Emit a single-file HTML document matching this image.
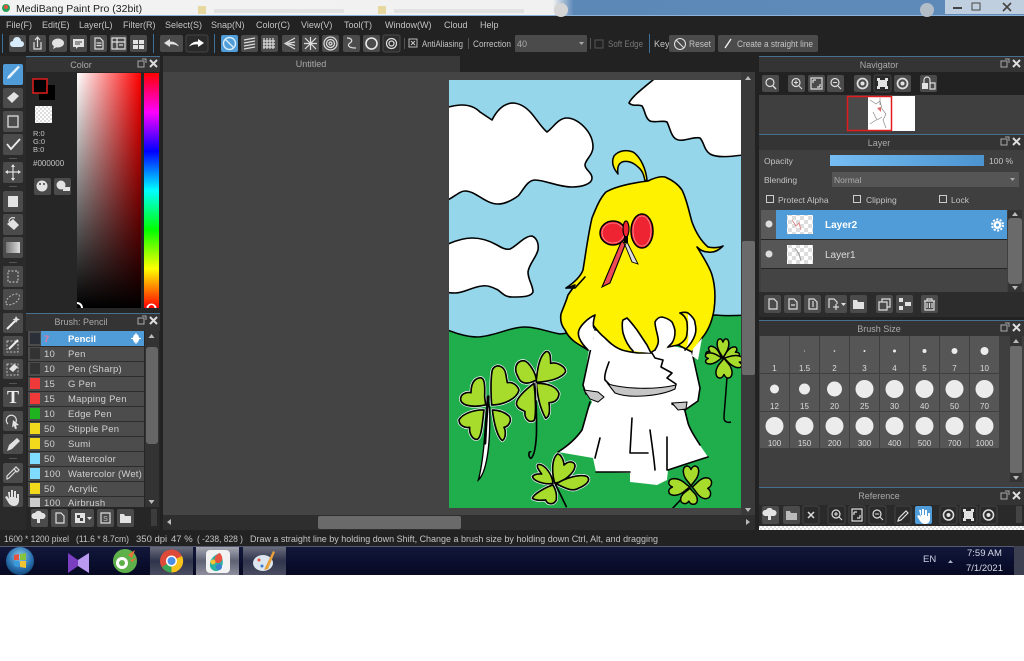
<!DOCTYPE html>
<html><head><meta charset="utf-8"><title>MediBang Paint Pro</title>
<style>
html,body{margin:0;padding:0;background:#fff;width:1024px;height:661px;overflow:hidden}
svg{display:block;position:absolute;left:0;top:0}
text{font-family:"Liberation Sans",sans-serif;font-size:9px;fill:#c4c4c4}
.b{fill:#4b4b4b}.ic{fill:none;stroke:#ddd;stroke-width:1.2}.f{fill:#e2e2e2}
.h{text-anchor:middle;fill:#aaa}.n{fill:#d0d0d0;font-size:9.5px;letter-spacing:.25px}
.s{text-anchor:middle;fill:#ddd;font-size:8px}
.ol{fill:none;stroke:#000;stroke-width:1.6;stroke-linecap:round;stroke-linejoin:round}
</style></head><body>
<svg width="1024" height="661" viewBox="0 0 1024 661" xmlns="http://www.w3.org/2000/svg">
<defs>
<clipPath id="art"><rect x="449" y="80" width="292" height="428"/></clipPath>
<linearGradient id="sv" x1="0" x2="1" y1="0" y2="0"><stop offset="0" stop-color="#fff"/><stop offset="1" stop-color="#f00"/></linearGradient>
<linearGradient id="bk" x1="0" x2="0" y1="0" y2="1"><stop offset="0" stop-color="#000" stop-opacity="0"/><stop offset="1" stop-color="#000"/></linearGradient>
<linearGradient id="hue" x1="0" x2="0" y1="0" y2="1"><stop offset="0" stop-color="#f00"/><stop offset=".167" stop-color="#f0f"/><stop offset=".333" stop-color="#00f"/><stop offset=".5" stop-color="#0ff"/><stop offset=".667" stop-color="#0f0"/><stop offset=".833" stop-color="#ff0"/><stop offset="1" stop-color="#f00"/></linearGradient>
<linearGradient id="tb" x1="0" x2="0" y1="0" y2="1"><stop offset="0" stop-color="#14183a"/><stop offset=".5" stop-color="#0b0f30"/><stop offset="1" stop-color="#070a22"/></linearGradient>
<linearGradient id="task" x1="0" x2="0" y1="0" y2="1"><stop offset="0" stop-color="#6a6d7c"/><stop offset=".5" stop-color="#30344c"/><stop offset="1" stop-color="#4a4d60"/></linearGradient>
<linearGradient id="taskA" x1="0" x2="0" y1="0" y2="1"><stop offset="0" stop-color="#a5a7b2"/><stop offset=".5" stop-color="#5f6274"/><stop offset="1" stop-color="#8d8f9d"/></linearGradient>
<linearGradient id="op" x1="0" x2="1" y1="0" y2="0"><stop offset="0" stop-color="#75bdf2"/><stop offset="1" stop-color="#4b94d0"/></linearGradient>
<linearGradient id="gr" x1="0" x2="1" y1="0" y2="0"><stop offset="0" stop-color="#777"/><stop offset="1" stop-color="#ddd"/></linearGradient>
<linearGradient id="tbar" x1="0" x2="1" y1="0" y2="0"><stop offset="0" stop-color="#f2f2f2"/><stop offset=".54" stop-color="#f1f1f1"/><stop offset=".56" stop-color="#5c88b8"/><stop offset="1" stop-color="#5f8bbb"/></linearGradient>
<radialGradient id="orb" cx=".5" cy=".35" r=".7"><stop offset="0" stop-color="#8fd0ee"/><stop offset=".6" stop-color="#2a72b0"/><stop offset="1" stop-color="#0f3d70"/></radialGradient>
<pattern id="chk" width="8" height="8" patternUnits="userSpaceOnUse"><rect width="8" height="8" fill="#fff"/><rect width="4" height="4" fill="#ddd"/><rect x="4" y="4" width="4" height="4" fill="#ddd"/></pattern>
<pattern id="chs" width="4" height="4" patternUnits="userSpaceOnUse"><rect width="4" height="4" fill="#fff"/><rect width="2" height="2" fill="#ddd"/><rect x="2" y="2" width="2" height="2" fill="#ddd"/></pattern>
<path id="leaf" d="M0 0C-3-5-13-9-14-19C-14-28-4-29 0-22C4-29 14-28 14-19C13-9 3-5 0 0Z" fill="#a8dc2c" stroke="#000" stroke-width="1.5" stroke-linejoin="round" vector-effect="non-scaling-stroke"/>
<g id="dock"><rect x="-1" y="-3" width="6" height="6" fill="none" stroke="#aaa"/><path d="M3-5h4v4" fill="none" stroke="#aaa"/><path d="M11-4l7 7M18-4l-7 7" stroke="#ddd" stroke-width="2"/></g>
<g id="cl" stroke-linejoin="round">
<path d="M110 165C80 172 40 170 35 150C33 133 50 125 66 128C66 105 72 85 95 83C108 85 108 110 107 140Z"/>
<path d="M128 165C125 130 125 80 130 60C138 40 165 45 170 70L175 98C190 95 205 105 210 120C205 145 165 165 128 165Z"/>
<path d="M105 180C80 178 40 190 30 210C30 228 50 235 62 232C60 250 70 270 85 268C98 262 100 220 105 180Z"/>
<path d="M130 180C135 220 145 260 160 272C172 265 170 240 165 232C180 230 190 210 180 198C165 185 145 180 130 180Z"/>
<path d="M258 92C240 102 215 105 207 80C195 60 198 32 225 32C240 35 262 70 262 92Z"/>
<path d="M262 90C265 60 270 20 290 5C305 0 305 25 305 40C325 35 350 50 350 65C340 85 300 95 262 97Z"/>
<path d="M262 100C265 130 270 170 290 205C305 200 302 170 300 158C320 158 330 145 330 130C320 105 290 100 262 100Z"/>
<path d="M255 100C235 115 205 140 202 160C205 180 225 180 228 185C225 205 240 220 255 212C262 200 260 140 255 100Z"/>
<path d="M318 400C310 380 305 330 325 312C340 312 345 340 345 345C360 330 380 335 378 350C375 370 345 395 318 400Z"/>
<path d="M312 400C290 405 255 395 250 380C258 370 270 372 278 372C265 355 260 345 270 343C290 345 310 375 312 400Z"/>
<path d="M322 402C345 385 395 370 415 380C430 395 400 410 388 415C370 428 340 410 322 402Z"/>
<path d="M312 405C295 410 255 430 250 445C265 455 285 450 290 450C295 465 315 465 322 450C325 430 318 415 312 405Z"/>
</g>
</defs>

<!-- window background -->
<rect width="1024" height="575" fill="#222"/>
<rect y="575" width="1024" height="86" fill="#fff"/>
<!-- title bar -->
<rect width="1024" height="15" fill="url(#tbar)"/>
<rect y="15" width="1024" height="1" fill="#8db4d8"/>
<circle cx="6" cy="8" r="4" fill="#25a25a"/><circle cx="6" cy="7" r="2" fill="#e8503f"/>
<text x="16" y="12" style="font-size:10.5px;fill:#222">MediBang Paint Pro (32bit)</text>
<rect x="198" y="6" width="8" height="8" fill="#e6d9a0"/><rect x="378" y="6" width="8" height="8" fill="#e6d9a0"/>
<rect x="214" y="9" width="130" height="4" fill="#e2e2e2"/><rect x="394" y="9" width="130" height="4" fill="#e2e2e2"/>
<circle cx="561" cy="10" r="7" fill="#d5d5d5"/><circle cx="927" cy="10" r="7" fill="#b3bdc8"/>
<rect x="945" y="0" width="79" height="14" fill="#c0cfdf"/>
<rect x="953" y="7" width="9" height="2" fill="#444"/><rect x="972" y="3" width="8" height="7" fill="none" stroke="#444"/>
<path d="M1003 3l8 8M1011 3l-8 8" stroke="#444" stroke-width="1.6"/>

<!-- menu -->
<text x="6" y="28">File(F)</text><text x="42" y="28">Edit(E)</text><text x="79" y="28">Layer(L)</text><text x="123" y="28">Filter(R)</text><text x="165" y="28">Select(S)</text><text x="211" y="28">Snap(N)</text><text x="256" y="28">Color(C)</text><text x="301" y="28">View(V)</text><text x="344" y="28">Tool(T)</text><text x="385" y="28">Window(W)</text><text x="444" y="28">Cloud</text><text x="480" y="28">Help</text>

<!-- toolbar -->
<rect x="2" y="34" width="1" height="19" fill="#3e6f96"/>
<rect class="b" x="9" y="35" width="17" height="17" rx="2"/><path d="M13 47a3 3 0 0 1 0-6 4 4 0 0 1 8 0 3 3 0 0 1 0 6z" fill="#d9ecfb"/>
<rect class="b" x="29" y="35" width="17" height="17" rx="2"/><path class="ic" d="M34 42v7h7v-7M37.500 47v-9M35 40l2.500-3 2.500 3"/>
<rect class="b" x="49" y="35" width="18" height="17" rx="2"/><ellipse class="f" cx="58" cy="43" rx="6" ry="4.500"/><path class="f" d="M54 46l-1 3 4-2z"/>
<rect class="b" x="70" y="35" width="17" height="17" rx="2"/><path class="f" d="M73 39h11v8h-6l-2 2v-2h-3z"/><path stroke="#444" d="M75 42h7M75 44h5"/>
<rect class="b" x="90" y="35" width="17" height="17" rx="2"/><path class="ic" d="M95 38h5l3 3v8h-8zM96.500 43h5M96.500 45.500h5"/>
<rect class="b" x="110" y="35" width="17" height="17" rx="2"/><path class="ic" d="M112 38h13v11h-13zM112 42h13M117 38v11M119 45h4"/>
<rect class="b" x="130" y="35" width="17" height="17" rx="2"/><path class="f" d="M133 40h5v4h-5zM139 40h5v4h-5zM133 45h5v4h-5zM139 45h5v4h-5z"/>
<rect x="153" y="34" width="1" height="19" fill="#3e6f96"/>
<rect class="b" x="160" y="35" width="23" height="17" rx="2"/><path class="f" d="M164 43l6-4v2.500c4 0 7 1.500 9 5-3-2-6-2.500-9-2v2.500z"/>
<rect x="186" y="35" width="22" height="17" rx="2" fill="#2a2a2a" stroke="#444"/><path fill="#fff" d="M204 43l-6-4v2.500c-4 0-7 1.500-9 5 3-2 6-2.500 9-2v2.500z"/>
<rect x="214" y="34" width="1" height="19" fill="#3e6f96"/>
<rect x="221" y="35" width="17" height="17" rx="2" fill="#4f9cd9"/><circle cx="229.500" cy="43.500" r="6" fill="none" stroke="#d8ecfa" stroke-width="1.400"/><path d="M225 39l9 9" stroke="#d8ecfa" stroke-width="1.400"/>
<rect class="b" x="241" y="35" width="17" height="17" rx="2"/><path class="ic" stroke-width=".8" d="M244 40l11-2M244 43l11-2M244 46l11-2M244 49l11-2"/>
<rect class="b" x="261" y="35" width="17" height="17" rx="2"/><path class="ic" d="M264 38v11M267 38v11M270 38v11M273 38v11M263 41h12M263 44h12M263 47h12"/>
<rect class="b" x="282" y="35" width="17" height="17" rx="2"/><path class="ic" d="M295 38l-10 5.500 10 5.500M295 42l-8 1.500 8 2"/>
<rect class="b" x="302" y="35" width="17" height="17" rx="2"/><path class="ic" d="M305 38l11 11M316 38l-11 11M304 43.500h13M310.500 37v13"/>
<rect class="b" x="322" y="35" width="17" height="17" rx="2"/><circle class="ic" cx="330.500" cy="43.500" r="6.500"/><circle class="ic" cx="330.500" cy="43.500" r="4"/><circle class="ic" cx="330.500" cy="43.500" r="1.500"/>
<rect class="b" x="343" y="35" width="17" height="17" rx="2"/><path class="ic" d="M347 38c5 0 6 3 3 5s-2 5 6 5"/>
<rect class="b" x="363" y="35" width="17" height="17" rx="2"/><circle cx="371.500" cy="43.500" r="5.500" fill="none" stroke="#e8e8e8" stroke-width="1.600"/>
<rect x="383" y="35" width="17" height="17" rx="2" fill="#2e2e2e" stroke="#4a4a4a"/><circle class="ic" cx="391.500" cy="43.500" r="5"/><circle class="ic" cx="391.500" cy="43.500" r="2.500"/>
<rect x="404" y="38" width="1" height="11" fill="#555"/>
<rect x="409" y="39" width="8" height="8" fill="none" stroke="#bbb"/><path d="M411 41l4 4M415 41l-4 4" stroke="#ccc"/>
<text x="422" y="47" textLength="41" lengthAdjust="spacingAndGlyphs">AntiAliasing</text>
<rect x="468" y="38" width="1" height="11" fill="#555"/>
<text x="473" y="47" textLength="38" lengthAdjust="spacingAndGlyphs">Correction</text>
<rect class="b" x="515" y="35" width="72" height="17" rx="1"/><text x="517" y="47" style="fill:#aaa">40</text><path d="M579 42h5l-2.500 3z" fill="#aaa"/>
<rect x="590" y="38" width="1" height="11" fill="#555"/>
<rect x="595" y="40" width="8" height="8" fill="none" stroke="#555"/>
<text x="608" y="47" style="fill:#777" textLength="35" lengthAdjust="spacingAndGlyphs">Soft Edge</text>
<rect x="649" y="34" width="1" height="19" fill="#3e6f96"/>
<text x="654" y="47">Key</text>
<rect class="b" x="669" y="35" width="46" height="17" rx="2"/><circle cx="680" cy="44" r="5.500" fill="none" stroke="#ddd" stroke-width="1.100"/><path d="M676 40l8 8" stroke="#ddd" stroke-width="1.100"/>
<text x="689" y="47" textLength="22" lengthAdjust="spacingAndGlyphs">Reset</text>
<rect class="b" x="718" y="35" width="100" height="17" rx="2"/><path d="M725 48l6-9" stroke="#eee" stroke-width="1.400"/>
<text x="737" y="47" textLength="76" lengthAdjust="spacingAndGlyphs">Create a straight line</text>

<!-- left tool column -->
<rect y="56" width="26" height="474" fill="#2a2a2a"/>
<rect x="3" y="64" width="20" height="21" rx="2" fill="#4f9cd9"/><path d="M7 79l3-1 10-11-2-1-10 10z" fill="#e8f2fa"/>
<rect class="b" x="3" y="88" width="20" height="20" rx="2"/><path class="f" d="M7 98l7-6 5 4-7 7z"/>
<rect class="b" x="3" y="111" width="20" height="21" rx="2"/><rect x="8" y="116" width="10" height="11" fill="none" stroke="#ddd" stroke-width="1.300"/>
<rect class="b" x="3" y="134" width="20" height="21" rx="2"/><path d="M7 144l4 5 9-10" fill="none" stroke="#eee" stroke-width="1.800"/>
<rect x="9" y="158" width="8" height="1" fill="#555"/>
<rect class="b" x="3" y="162" width="20" height="21" rx="2"/><path class="ic" stroke-width="1.600" d="M6 172h14M13 165v14"/><path class="f" d="M13 164l-2 3h4zM13 181l-2-3h4zM5 172l3-2v4zM21 172l-3-2v4z"/>
<rect x="9" y="186" width="8" height="1" fill="#555"/>
<rect class="b" x="3" y="191" width="20" height="21" rx="2"/><rect class="f" x="8" y="196" width="10" height="11"/>
<rect class="b" x="3" y="214" width="20" height="21" rx="2"/><path class="f" d="M7 224l6-5 6 6-5 5z"/><path class="ic" d="M9 222c0-4 3-5 6-4"/>
<rect class="b" x="3" y="237" width="20" height="21" rx="2"/><rect x="6" y="242" width="14" height="11" fill="url(#gr)"/>
<rect x="9" y="262" width="8" height="1" fill="#555"/>
<rect class="b" x="3" y="266" width="20" height="21" rx="2"/><rect x="8" y="271" width="10" height="11" fill="none" stroke="#ccc" stroke-dasharray="2 1.500"/>
<rect class="b" x="3" y="289" width="20" height="21" rx="2"/><path d="M6 303c0-5 6-9 11-9 3 0 3 3 1 6-2 4-12 7-12 3z" fill="none" stroke="#bbb" stroke-dasharray="2 1.500"/>
<rect class="b" x="3" y="313" width="20" height="20" rx="2"/><path d="M7 329l8-8" stroke="#eee" stroke-width="2"/><path class="f" d="M16 316l1.500 2.500 2.500 1-2.500 1-1.500 2.500-1-2.500-2.500-1 2.500-1z"/>
<rect class="b" x="3" y="336" width="20" height="20" rx="2"/><rect x="7" y="341" width="11" height="11" fill="none" stroke="#bbb" stroke-dasharray="2 1.500"/><path d="M9 349l9-9" stroke="#eee" stroke-width="2"/>
<rect class="b" x="3" y="359" width="20" height="20" rx="2"/><rect x="7" y="364" width="11" height="11" fill="none" stroke="#bbb" stroke-dasharray="2 1.500"/><path class="f" d="M9 369l5-5 4 3-5 5z"/>
<rect x="9" y="383" width="8" height="1" fill="#555"/>
<rect class="b" x="3" y="387" width="20" height="20" rx="2"/><text x="13" y="403" text-anchor="middle" style="font-family:'Liberation Serif',serif;font-size:18px;font-weight:bold;fill:#eee">T</text>
<rect class="b" x="3" y="411" width="20" height="20" rx="2"/><path class="ic" d="M8 424a5 5 0 1 1 5 1"/><path class="f" d="M13 420l6 5-3 .5 1 3-2 .5-1-3-2 1.500z"/>
<rect class="b" x="3" y="434" width="20" height="20" rx="2"/><path class="f" d="M7 451l2-6 8-7 3 3-8 8z"/>
<rect x="9" y="458" width="8" height="1" fill="#555"/>
<rect class="b" x="3" y="463" width="20" height="20" rx="2"/><path class="ic" stroke-width="1.500" d="M7 479l2-1 7-7-2-2-7 7zM14 469l2-2 3 3-2 2z"/>
<rect class="b" x="3" y="486" width="20" height="21" rx="2"/><path class="f" d="M8 492h2v5h1v-7h2v7h1v-6h2v7h1v-4h2v6c0 4-2 6-5 6s-5-2-6-4l-3-5 2-1 2 3z"/>

<!-- colour panel -->
<rect x="26" y="56" width="134" height="258" fill="#262626"/>
<rect x="26" y="56" width="134" height="16" fill="#343434"/><rect x="26" y="56" width="134" height="1" fill="#47708f"/>
<text class="h" x="81" y="68">Color</text>
<use href="#dock" x="139" y="64"/>
<rect x="39" y="85" width="16" height="15" fill="#000"/>
<rect x="33" y="79" width="14" height="14" fill="#000" stroke="#e21c1c" stroke-width="1.500"/>
<rect x="35" y="106" width="17" height="17" fill="url(#chs)"/>
<text x="33" y="136" style="font-size:7.500px">R:0</text><text x="33" y="144" style="font-size:7.500px">G:0</text><text x="33" y="152" style="font-size:7.500px">B:0</text>
<text x="33" y="166" style="font-size:8px">#000000</text>
<rect class="b" x="34" y="178" width="17" height="17" rx="2"/><circle class="f" cx="42" cy="186" r="5.500"/><circle cx="40" cy="184" r="1" fill="#444"/><circle cx="44" cy="184" r="1" fill="#444"/>
<rect class="b" x="54" y="178" width="17" height="17" rx="2"/><circle class="f" cx="61" cy="185" r="4.500"/><rect class="f" x="63" y="187" width="7" height="4"/>
<rect x="77" y="73" width="64" height="235" fill="url(#sv)"/><rect x="77" y="73" width="64" height="235" fill="url(#bk)"/>
<path d="M77 302a6 6 0 0 1 6 6h-2a4 4 0 0 0-4-4z" fill="#fff"/>
<rect x="144" y="73" width="15" height="235" fill="url(#hue)"/>
<path d="M146.500 308a5 4.500 0 0 1 10 0h-2a3 3 0 0 0-6 0z" fill="#fff"/>

<!-- brush panel -->
<rect x="26" y="314" width="134" height="216" fill="#262626"/>
<rect x="26" y="313" width="134" height="18" fill="#343434"/><rect x="26" y="313" width="134" height="1" fill="#47708f"/>
<text class="h" x="81" y="325">Brush: Pencil</text>
<use href="#dock" x="139" y="321"/>
<rect x="28" y="331" width="116" height="176" fill="#4c4c4c"/>
<rect x="41" y="331" width="103" height="15" fill="#4f9cd9"/>
<g fill="#2c2c2c"><rect x="28" y="346" width="116" height="1"/><rect x="28" y="361" width="116" height="1"/><rect x="28" y="376" width="116" height="1"/><rect x="28" y="391" width="116" height="1"/><rect x="28" y="406" width="116" height="1"/><rect x="28" y="421" width="116" height="1"/><rect x="28" y="436" width="116" height="1"/><rect x="28" y="451" width="116" height="1"/><rect x="28" y="466" width="116" height="1"/><rect x="28" y="481" width="116" height="1"/><rect x="28" y="496" width="116" height="1"/></g>
<rect x="30" y="333" width="10" height="11" fill="#2b2f38"/>
<rect x="30" y="348" width="10" height="11" fill="#333"/><rect x="30" y="363" width="10" height="11" fill="#333"/>
<rect x="30" y="378" width="10" height="11" fill="#f03a3a"/><rect x="30" y="393" width="10" height="11" fill="#f03a3a"/>
<rect x="30" y="408" width="10" height="11" fill="#1fb41f"/><rect x="30" y="423" width="10" height="11" fill="#f3d91c"/>
<rect x="30" y="438" width="10" height="11" fill="#f3d91c"/><rect x="30" y="453" width="10" height="11" fill="#7fdcff"/>
<rect x="30" y="468" width="10" height="11" fill="#7fdcff"/><rect x="30" y="483" width="10" height="11" fill="#f3d91c"/>
<rect x="30" y="498" width="10" height="9" fill="#ccc"/>
<text x="44" y="342" style="font-weight:bold;fill:#e67aa0;font-size:9.5px">7</text><text x="68" y="342" style="font-weight:bold;fill:#fff;font-size:9.5px">Pencil</text>
<path d="M133 338.500l1.500-3.500h3l1.500 3.500-1.500 3.500h-3z M131 338.500h10M136 333v11" fill="#fff" stroke="#fff"/>
<text class="n" x="44" y="357">10</text><text class="n" x="68" y="357">Pen</text>
<text class="n" x="44" y="372">10</text><text class="n" x="68" y="372">Pen (Sharp)</text>
<text class="n" x="44" y="387">15</text><text class="n" x="68" y="387">G Pen</text>
<text class="n" x="44" y="402">15</text><text class="n" x="68" y="402">Mapping Pen</text>
<text class="n" x="44" y="417">10</text><text class="n" x="68" y="417">Edge Pen</text>
<text class="n" x="44" y="432">50</text><text class="n" x="68" y="432">Stipple Pen</text>
<text class="n" x="44" y="447">50</text><text class="n" x="68" y="447">Sumi</text>
<text class="n" x="44" y="462">50</text><text class="n" x="68" y="462">Watercolor</text>
<text class="n" x="44" y="477">100</text><text class="n" x="68" y="477" textLength="74">Watercolor (Wet)</text>
<text class="n" x="44" y="492">50</text><text class="n" x="68" y="492">Acrylic</text>
<text class="n" x="44" y="506">100</text><text class="n" x="68" y="506">Airbrush</text>
<rect x="28" y="507" width="116" height="2" fill="#262626"/>
<rect x="145" y="331" width="14" height="176" fill="#333"/>
<rect x="146" y="347" width="12" height="97" rx="3" fill="#666"/>
<path d="M148.500 338l3-4 3 4zM148.500 500l3 4 3-4z" fill="#bbb"/>
<rect class="b" x="31" y="509" width="17" height="18" rx="2"/><path class="f" d="M34 519a3 3 0 0 1 1-6 4 4 0 0 1 7 0 3 3 0 0 1 1 6h-3v4h-3v-4z"/>
<rect class="b" x="51" y="509" width="17" height="18" rx="2"/><path class="ic" d="M56 513h5l3 3v7h-8z"/>
<rect class="b" x="71" y="509" width="23" height="18" rx="2"/><path class="f" d="M75 513h10v10h-10z"/><path d="M77 515h3v3h-3zM80 518h3v3h-3z" fill="#444"/><path class="f" d="M87 517h5l-2.500 3z"/>
<rect class="b" x="97" y="509" width="17" height="18" rx="2"/><path class="ic" d="M101 513h9v10h-9z"/><text x="105.500" y="521" text-anchor="middle" style="font-size:7px">S</text>
<rect class="b" x="117" y="509" width="17" height="18" rx="2"/><path class="f" d="M120 514h4l1 2h6v7h-11z"/>
<rect x="151" y="509" width="6" height="17" fill="#3c3c3c"/>

<!-- canvas area -->
<rect x="163" y="56" width="297" height="16" fill="#383838"/>
<rect x="163" y="72" width="592" height="443" fill="#444"/>
<text class="h" x="311" y="67">Untitled</text>

<!-- artwork -->
<g clip-path="url(#art)">
<rect x="449" y="80" width="292" height="428" fill="#95d6ea"/>
<path d="M440 327C452 332 465 337 478 337C495 336 510 327 525 327C537 327 548 332 560 334L700 318L715 315C725 316 733 316 750 315V520H440Z" fill="#1fae4b" stroke="#000" stroke-width="1.500"/>
<g class="ol">
<path d="M440 110C447 107 456 105 462 105C470 105 476 108 480 112L492 120C496 112 502 104 512 103C520 103 527 108 532 114C537 120 542 128 547 132C553 128 558 118 567 118C578 118 593 132 593 147C593 155 585 160 585 165C585 170 592 172 592 178C592 184 582 187 572 187C558 187 545 180 535 180C527 180 523 191 518 196C511 201 505 204 498 204C485 204 476 191 465 191C459 191 454 198 440 204Z" fill="#fff"/>
<path d="M665 70C646 86 632 96 629 103C633 107 638 104 642 106C645 110 645 118 650 121C655 123 662 120 667 122C670 128 671 136 676 139C682 143 694 136 700 138C704 142 704 150 710 154C717 158 730 157 750 154V70Z" fill="#fff"/>
<path d="M440 248C455 240 465 238 472 238C482 238 490 241 497 245C502 248 506 250 510 249C517 246 524 236 532 236C537 238 539 244 538 250C536 258 529 264 528 272C528 280 533 285 533 292C531 297 522 297 512 297C505 297 502 293 498 290C492 287 487 285 482 286C472 287 464 293 455 293C452 293 447 293 440 291Z" fill="#fff"/>
</g>
<!-- dress -->
<path d="M592 330L583 387L592 402L588 410L582 430C575 440 566 447 558 452L593 458L596 472L630 473L630 482L657 485L667 480L668 470L708 457C700 445 692 435 688 423L684 410L698 402L700 388L692 350Z" fill="#fff"/>
<path class="ol" stroke-width="1.300" d="M593 338L583 385L586 394M590 402C587 412 585 420 582 430C575 440 566 447 558 452M596 472H630M668 470C680 466 695 461 708 457M700 445C695 437 690 430 688 423L685 411"/>
<path class="ol" stroke-width="1.300" d="M692 352L700 388L698 401L685 410L672 404M609 362C606 370 604 376 605 380L609 384M647 345L655 358L663 360L661 367L672 373L667 378L676 384"/>
<path d="M608 384C625 389 655 390 676 385L675 389C660 396 630 399 615 393Z" fill="#c6c6c6" stroke="#000" stroke-width="1.100"/>
<path d="M584 390L590 399L598 402L604 397L598 392Z" fill="#c6c6c6" stroke="#000" stroke-width="1"/>
<path d="M672 403L687 402L686 409L678 410Z" fill="#c6c6c6" stroke="#000" stroke-width="1"/>
<path class="ol" stroke-width="1.200" d="M632 418L630 453H648M650 430C652 445 654 458 655 470M667 437L667 470M600 438C598 446 597 450 595 458"/>
<!-- hair -->
<path d="M648 181C654 178 660 176 665 177C672 180 678 184 682 190C687 200 689 212 692 222C696 233 701 241 708 247C713 248 718 248 723 246C718 251 713 253 708 252C703 252 700 250 697 247C704 258 710 268 712 275C715 285 716 295 714 310C712 322 708 331 702 338C699 343 696 348 692 352L678 345L668 347L655 350L650 353L638 353C632 352 628 352 622 350C614 347 609 342 605 338C600 334 596 329 593 325L588 350C580 345 570 341 565 330C561 325 560 320 561 314C563 308 566 302 568 295L575 285C570 287 568 288 566 288C572 284 580 278 583 270C586 252 588 235 592 218C596 208 600 198 606 192C616 186 632 183 648 181Z" fill="#fff200" stroke="#000" stroke-width="1.600" stroke-linejoin="round"/>
<path d="M647 180C646 170 641 157 633 152C626 149 618 151 614 156C611 162 613 168 618 174C617 168 618 164 622 162C628 160 634 163 638 167C643 171 644 176 645 181Z" fill="#fff200" stroke="#000" stroke-width="1.500" stroke-linejoin="round"/>
<path class="ol" d="M585 277L575 288L566 288"/>
<!-- white locks -->
<path d="M588 350C580 342 577 335 579 330C581 325 588 318 595 315C593 322 593 326 594 330L593 350Z" fill="#fff"/>
<path class="ol" d="M588 350C580 342 577 335 579 330C581 325 588 318 595 315C593 322 593 326 594 328"/>
<path d="M633 351C628 346 625 340 623 333C622 328 622 322 623 320L627 318C631 322 634 326 637 330L647 345L651 353Z" fill="#fff"/>
<path class="ol" d="M633 351C628 346 625 340 623 333C622 328 622 322 623 320L627 318C631 322 634 326 637 330L647 345L651 353"/>
<path d="M655 350C658 345 659 342 658 338C657 332 655 327 655 322C657 318 660 317 662 317C667 318 670 320 672 322C674 326 675 329 675 332C675 337 674 340 672 343L668 347L660 352Z" fill="#fff"/>
<path class="ol" d="M655 350C658 345 659 342 658 338C657 332 655 327 655 322C657 318 660 317 662 317C667 318 670 320 672 322C674 326 675 329 675 332C675 337 674 340 672 343L668 347"/>
<path class="ol" d="M678 345C684 342 687 338 687 333C688 328 687 325 687 322C686 318 684 315 680 313"/>
<path d="M688 313C692 316 695 320 695 323C696 327 696 332 695 335C694 339 692 343 690 345C688 348 686 349 685 350C688 345 689 338 688 333C689 326 688 320 688 313Z" fill="#fff"/>
<path class="ol" d="M680 313C684 312 686 312 688 313C692 316 695 320 695 323C696 327 696 332 695 335C693 341 689 346 685 350"/>
<path d="M693 349L702 338L698 360L692 356Z" fill="#fff"/>
<!-- bow -->
<path d="M622 240L602 287L610 283L625 245Z" fill="#ee4a55" stroke="#000" stroke-width="1.100"/>
<path d="M627 242L638 264L632 262L625 245Z" fill="#ddd" stroke="#000" stroke-width=".9"/>
<ellipse cx="613" cy="233" rx="13" ry="12" fill="#ee2433" stroke="#000" stroke-width="1.500"/>
<ellipse cx="642" cy="231" rx="11" ry="17" fill="#ee2433" stroke="#000" stroke-width="1.500"/>
<ellipse cx="613" cy="233" rx="11" ry="10" fill="none" stroke="#f6b5bb" stroke-width=".6"/>
<ellipse cx="642" cy="231" rx="9" ry="15" fill="none" stroke="#f6b5bb" stroke-width=".6"/>
<ellipse cx="626" cy="229" rx="3" ry="8" fill="#ee2433" stroke="#000" stroke-width="1.200"/>
<path d="M624 236L624 243L628 243L628 236Z" fill="#000"/>
<!-- clovers -->
<g transform="translate(449 350) scale(.3333)" stroke-linecap="round">
<use href="#cl" stroke="#fff" stroke-width="9" fill="none"/>
<use href="#cl" stroke="#000" stroke-width="5" fill="#a8dc2c"/>
<path d="M262 100C258 140 265 200 262 260C260 290 255 320 245 325C238 320 238 305 245 305" stroke="#000" stroke-width="5" fill="none"/>
<path d="M262 100L262 150" stroke="#ddd" stroke-width="2" fill="none"/>
<path d="M115 140C110 220 105 330 88 390C110 370 125 300 122 175Z" fill="#fff" stroke="#000" stroke-width="4"/>
<path d="M118 140C112 200 110 240 108 280" stroke="#000" stroke-width="8" fill="none"/>
<path d="M318 400L352 470" stroke="#000" stroke-width="5" fill="none"/>
</g>
<path d="M690 490L671 510" stroke="#000" stroke-width="1.600" fill="none"/>
<use href="#leaf" transform="translate(691 486) rotate(0) scale(.55 .75)"/>
<use href="#leaf" transform="translate(690 487) rotate(-90) scale(.6 .8)"/>
<use href="#leaf" transform="translate(692 487) rotate(95) scale(.75 .72)"/>
<use href="#leaf" transform="translate(690 488) rotate(185) scale(.6 .6)"/>
<path d="M727 376C726 395 724 412 724 418C724 422 728 423 731 422" stroke="#000" stroke-width="1.500" fill="none"/>
<use href="#leaf" transform="translate(723 358) rotate(0) scale(.42 .72)"/>
<use href="#leaf" transform="translate(722 358) rotate(-62) scale(.42 .62)"/>
<use href="#leaf" transform="translate(723 358) rotate(65) scale(.42 .62)"/>
<use href="#leaf" transform="translate(722 358) rotate(-92) scale(.4 .62)"/>
<use href="#leaf" transform="translate(724 358) rotate(180) scale(.58 .75)"/>
<use href="#leaf" transform="translate(724 358) rotate(105) scale(.42 .72)"/>
</g>

<!-- canvas scrollbars -->
<rect x="741" y="72" width="14" height="443" fill="#3a3a3a"/>
<rect x="742" y="241" width="13" height="134" rx="2" fill="#6a6a6a"/>
<path d="M745 80l3-4 3 4zM745 508l3 4 3-4z" fill="#bbb"/>
<rect x="163" y="515" width="592" height="15" fill="#2e2e2e"/>
<rect x="318" y="516" width="143" height="13" rx="2" fill="#6a6a6a"/>
<path d="M171 519l-4 3 4 3zM746 519l4 3-4 3z" fill="#bbb"/>

<!-- navigator -->
<rect x="759" y="56" width="265" height="78" fill="#3f3f3f"/>
<rect x="759" y="56" width="265" height="16" fill="#343434"/><rect x="759" y="56" width="265" height="1" fill="#47708f"/>
<text class="h" x="879" y="68">Navigator</text>
<use href="#dock" x="1002" y="64"/>
<rect x="759" y="72" width="265" height="23" fill="#222"/>
<rect class="b" x="762" y="75" width="17" height="17" rx="2"/><circle class="ic" cx="770" cy="82.500" r="4"/><path d="M773 86l3 3" stroke="#ddd" stroke-width="1.400"/>
<rect class="b" x="788" y="75" width="17" height="17" rx="2"/><circle class="ic" cx="796" cy="82.500" r="4"/><path d="M799 86l3 3M794 82.500h4M796 80.500v4" stroke="#ddd" stroke-width="1.100"/>
<rect class="b" x="808" y="75" width="17" height="17" rx="2"/><path class="ic" d="M811 78h11v11h-11zM813 80h3M813 80v3M820 87h-3M820 87v-3"/>
<rect class="b" x="827" y="75" width="17" height="17" rx="2"/><circle class="ic" cx="835" cy="82.500" r="4"/><path d="M838 86l3 3M833 82.500h4" stroke="#ddd" stroke-width="1.100"/>
<rect class="b" x="854" y="75" width="17" height="17" rx="2"/><circle cx="862.500" cy="83.500" r="5" fill="none" stroke="#ddd" stroke-width="1.800"/><circle class="f" cx="862.500" cy="83.500" r="2"/>
<rect x="874" y="75" width="17" height="17" rx="2" fill="#2a2a2a" stroke="#444"/><rect class="f" x="878" y="80" width="9" height="7"/><path class="f" d="M877 78h3v3h-3zM885 78h3v3h-3zM877 86h3v3h-3zM885 86h3v3h-3z"/>
<rect class="b" x="894" y="75" width="17" height="17" rx="2"/><circle cx="902.500" cy="83.500" r="5" fill="none" stroke="#ddd" stroke-width="1.800"/><circle class="f" cx="902.500" cy="83.500" r="2"/>
<rect class="b" x="920" y="75" width="17" height="17" rx="2"/><rect class="f" x="922" y="83" width="6" height="6"/><path class="ic" d="M924 83v-3a3 3 0 0 1 6 0v3M930 83h5v6h-5z"/>
<rect x="847" y="96" width="68" height="35" fill="#fff"/>
<rect x="847" y="96" width="21" height="35" fill="#4a4a4a"/>
<path d="M870 100l6 4 4-3 2 8 4 5-3 6 3 8M873 112l4 8 5-3M870 124l6-4M880 98v7" stroke="#888" stroke-width=".7" fill="none"/>
<path d="M877 108l4-1v5z" fill="#d66"/>
<rect x="847.500" y="96.500" width="44" height="34" fill="none" stroke="#e21c1c" stroke-width="1.500"/>

<!-- layer panel -->
<rect x="759" y="134" width="265" height="183" fill="#3f3f3f"/>
<rect x="759" y="134" width="265" height="16" fill="#343434"/><rect x="759" y="134" width="265" height="1" fill="#47708f"/>
<text class="h" x="879" y="146">Layer</text>
<use href="#dock" x="1002" y="142"/>
<text x="764" y="164" style="font-size:8.500px">Opacity</text>
<rect x="830" y="155" width="154" height="11" fill="url(#op)"/>
<text x="989" y="164" style="font-size:8.500px">100 %</text>
<text x="764" y="183" style="font-size:8.500px">Blending</text>
<rect x="832" y="172" width="187" height="15" fill="#555"/><text x="834" y="183" style="font-size:8.500px;fill:#aaa">Normal</text>
<path d="M1010 178h5l-2.500 3z" fill="#aaa"/>
<rect x="766.500" y="195.500" width="7" height="7" fill="none" stroke="#ccc"/><text x="778" y="203" style="font-size:8.500px">Protect Alpha</text>
<rect x="853.500" y="195.500" width="7" height="7" fill="none" stroke="#ccc"/><text x="866" y="203" style="font-size:8.500px">Clipping</text>
<rect x="939.500" y="195.500" width="7" height="7" fill="none" stroke="#ccc"/><text x="951" y="203" style="font-size:8.500px">Lock</text>
<rect x="761" y="210" width="246" height="82" fill="#444"/>
<rect x="761" y="210" width="246" height="29" fill="#5a5a5a"/>
<rect x="776" y="210" width="231" height="29" fill="#4f9cd9"/>
<rect x="761" y="239" width="246" height="1" fill="#262626"/>
<rect x="761" y="240" width="246" height="28" fill="#565656"/>
<rect x="761" y="268" width="246" height="1" fill="#262626"/>
<circle cx="769" cy="224" r="3.500" fill="#ddd"/><circle cx="769" cy="254" r="3.500" fill="#ddd"/>
<rect x="787" y="215" width="26" height="19" fill="url(#chk)"/><rect x="787" y="245" width="26" height="19" fill="url(#chk)"/>
<path d="M792 220l4 6 3-3 2 7" stroke="#d88" fill="none"/><path d="M795 248l4 6 2 7" stroke="#999" fill="none"/>
<text x="825" y="228" style="font-weight:bold;font-size:10px;fill:#fff">Layer2</text>
<text x="825" y="258" style="font-size:10px;fill:#ddd">Layer1</text>
<circle cx="997.500" cy="225" r="4" fill="#fff"/><circle cx="997.500" cy="225" r="5.500" fill="none" stroke="#fff" stroke-width="2" stroke-dasharray="2 1.500"/><circle cx="997.500" cy="225" r="1.500" fill="#4f9cd9"/>
<rect x="1008" y="210" width="14" height="82" fill="#333"/>
<rect x="1008" y="218" width="14" height="66" rx="3" fill="#6a6a6a"/>
<path d="M1012 216l3-4 3 4zM1012 286l3 4 3-4z" fill="#bbb"/>
<rect x="759" y="292" width="265" height="25" fill="#2c2c2c"/>
<rect class="b" x="764" y="295" width="17" height="18" rx="2"/><path class="ic" d="M769 299h5l3 3v7h-8z"/>
<rect class="b" x="784" y="295" width="17" height="18" rx="2"/><path class="ic" d="M789 299h5l3 3v7h-8zM791 305h4"/>
<rect class="b" x="804" y="295" width="17" height="18" rx="2"/><path class="ic" d="M809 299h5l3 3v7h-8zM813 301v6"/>
<rect class="b" x="825" y="295" width="22" height="18" rx="2"/><path class="ic" d="M829 308v-9h5l3 3v2M833 307h6M836 304v6"/><path class="f" d="M841 303h5l-2.500 3z"/>
<rect class="b" x="850" y="295" width="17" height="18" rx="2"/><path class="f" d="M853 300h4l1 2h6v7h-11z"/>
<rect class="b" x="876" y="295" width="17" height="18" rx="2"/><path class="ic" d="M879 302h8v8h-8zM882 302v-3h8v8h-3"/>
<rect class="b" x="896" y="295" width="17" height="18" rx="2"/><path class="f" d="M899 298h4v4h-4zM899 306h4v4h-4zM905 302h6v4h-6z"/>
<rect class="b" x="921" y="295" width="17" height="18" rx="2"/><path class="ic" d="M924 301h11M925 301v9h9v-9M927 303v5M929.500 303v5M932 303v5M927 301v-2h5v2"/>

<!-- brush size -->
<rect x="759" y="320" width="265" height="168" fill="#3f3f3f"/>
<rect x="759" y="320" width="265" height="16" fill="#343434"/><rect x="759" y="320" width="265" height="1" fill="#47708f"/>
<text class="h" x="879" y="332">Brush Size</text>
<use href="#dock" x="1002" y="328"/>
<g fill="#565656">
<rect x="760" y="336" width="29" height="37"/><rect x="790" y="336" width="29" height="37"/><rect x="820" y="336" width="29" height="37"/><rect x="850" y="336" width="29" height="37"/><rect x="880" y="336" width="29" height="37"/><rect x="910" y="336" width="29" height="37"/><rect x="940" y="336" width="29" height="37"/><rect x="970" y="336" width="29" height="37"/>
<rect x="760" y="374" width="29" height="37"/><rect x="790" y="374" width="29" height="37"/><rect x="820" y="374" width="29" height="37"/><rect x="850" y="374" width="29" height="37"/><rect x="880" y="374" width="29" height="37"/><rect x="910" y="374" width="29" height="37"/><rect x="940" y="374" width="29" height="37"/><rect x="970" y="374" width="29" height="37"/>
<rect x="760" y="412" width="29" height="36"/><rect x="790" y="412" width="29" height="36"/><rect x="820" y="412" width="29" height="36"/><rect x="850" y="412" width="29" height="36"/><rect x="880" y="412" width="29" height="36"/><rect x="910" y="412" width="29" height="36"/><rect x="940" y="412" width="29" height="36"/><rect x="970" y="412" width="29" height="36"/>
</g>
<g fill="#ececec">
<circle cx="804.500" cy="351" r=".5"/><circle cx="834.500" cy="351" r=".8"/><circle cx="864.500" cy="351" r="1"/><circle cx="894.500" cy="351" r="1.500"/><circle cx="924.500" cy="351" r="2"/><circle cx="954.500" cy="351" r="3"/><circle cx="984.500" cy="351" r="4"/>
<circle cx="774.500" cy="389" r="4.500"/><circle cx="804.500" cy="389" r="5.500"/><circle cx="834.500" cy="389" r="7.500"/><circle cx="864.500" cy="389" r="9"/><circle cx="894.500" cy="389" r="9"/><circle cx="924.500" cy="389" r="9"/><circle cx="954.500" cy="389" r="9"/><circle cx="984.500" cy="389" r="9"/>
<circle cx="774.500" cy="426" r="9"/><circle cx="804.500" cy="426" r="9"/><circle cx="834.500" cy="426" r="9"/><circle cx="864.500" cy="426" r="9"/><circle cx="894.500" cy="426" r="9"/><circle cx="924.500" cy="426" r="9"/><circle cx="954.500" cy="426" r="9"/><circle cx="984.500" cy="426" r="9"/>
</g>
<text class="s" x="774.500" y="371">1</text><text class="s" x="804.500" y="371">1.5</text><text class="s" x="834.500" y="371">2</text><text class="s" x="864.500" y="371">3</text><text class="s" x="894.500" y="371">4</text><text class="s" x="924.500" y="371">5</text><text class="s" x="954.500" y="371">7</text><text class="s" x="984.500" y="371">10</text>
<text class="s" x="774.500" y="409">12</text><text class="s" x="804.500" y="409">15</text><text class="s" x="834.500" y="409">20</text><text class="s" x="864.500" y="409">25</text><text class="s" x="894.500" y="409">30</text><text class="s" x="924.500" y="409">40</text><text class="s" x="954.500" y="409">50</text><text class="s" x="984.500" y="409">70</text>
<text class="s" x="774.500" y="446">100</text><text class="s" x="804.500" y="446">150</text><text class="s" x="834.500" y="446">200</text><text class="s" x="864.500" y="446">300</text><text class="s" x="894.500" y="446">400</text><text class="s" x="924.500" y="446">500</text><text class="s" x="954.500" y="446">700</text><text class="s" x="984.500" y="446">1000</text>
<rect x="1010" y="336" width="12" height="146" fill="#333"/>
<rect x="1010" y="346" width="12" height="127" rx="2" fill="#6a6a6a"/>
<path d="M1013 343l3-4 3 4zM1013 476l3 4 3-4z" fill="#bbb"/>

<!-- reference -->
<rect x="759" y="488" width="265" height="44" fill="#2a2a2a"/>
<rect x="759" y="488" width="265" height="17" fill="#343434"/><rect x="759" y="487" width="265" height="1" fill="#47708f"/>
<text class="h" x="879" y="499">Reference</text>
<use href="#dock" x="1002" y="496"/>
<rect class="b" x="762" y="506" width="17" height="18" rx="2"/><path class="f" d="M765 516a3 3 0 0 1 1-6 4 4 0 0 1 7 0 3 3 0 0 1 1 6h-3v4h-3v-4z"/>
<rect class="b" x="783" y="506" width="17" height="18" rx="2"/><path d="M786 511h4l1 2h6v7h-11z" fill="#bbb"/>
<rect x="803" y="506" width="16" height="18" rx="2" fill="#2a2a2a" stroke="#444"/><path d="M808 512l6 6M814 512l-6 6" stroke="#ddd" stroke-width="1.500"/>
<rect x="828" y="506" width="17" height="18" rx="2" fill="#2a2a2a" stroke="#444"/><circle class="ic" cx="836" cy="514" r="4"/><path d="M839 517l3 3M834 514h4M836 512v4" stroke="#ddd" stroke-width="1.100"/>
<rect x="849" y="506" width="16" height="18" rx="2" fill="#2a2a2a" stroke="#444"/><path class="ic" d="M852 509h10v12h-10zM854 512h3M854 512v3M860 518h-3M860 518v-3"/>
<rect x="869" y="506" width="17" height="18" rx="2" fill="#2a2a2a" stroke="#444"/><circle class="ic" cx="877" cy="514" r="4"/><path d="M880 517l3 3M875 514h4" stroke="#ddd" stroke-width="1.100"/>
<rect x="895" y="506" width="16" height="18" rx="2" fill="#2a2a2a" stroke="#444"/><path class="ic" stroke-width="1.500" d="M898 521l1-3 7-7 2 2-7 7z"/>
<rect x="915" y="506" width="17" height="18" rx="2" fill="#4f9cd9"/><path d="M919 510h2v5h1v-6h2v6h1v-5h2v6h1v-3h2v6c0 3-2 5-5 5s-4-2-5-3l-3-5 2-1 2 2z" fill="#fff"/>
<rect x="940" y="506" width="17" height="18" rx="2" fill="#2a2a2a" stroke="#444"/><circle cx="948.500" cy="515" r="5" fill="none" stroke="#ddd" stroke-width="1.600"/><circle class="f" cx="948.500" cy="515" r="2"/>
<rect x="960" y="506" width="17" height="18" rx="2" fill="#2a2a2a" stroke="#444"/><rect class="f" x="964" y="511" width="9" height="8"/><path class="f" d="M963 509h3v3h-3zM971 509h3v3h-3zM963 518h3v3h-3zM971 518h3v3h-3z"/>
<rect x="980" y="506" width="17" height="18" rx="2" fill="#2a2a2a" stroke="#444"/><circle cx="988.500" cy="515" r="5" fill="none" stroke="#ddd" stroke-width="1.600"/><circle class="f" cx="988.500" cy="515" r="2"/>
<rect x="1016" y="506" width="6" height="17" fill="#444"/>
<rect x="759" y="526" width="265" height="5" fill="url(#chs)"/>

<!-- status bar -->
<rect y="530" width="1024" height="16" fill="#222"/>
<text x="4" y="542" style="font-size:9.500px" textLength="65" lengthAdjust="spacingAndGlyphs">1600 * 1200 pixel</text>
<text x="76" y="542" style="font-size:9.500px" textLength="53" lengthAdjust="spacingAndGlyphs">(11.6 * 8.7cm)</text>
<text x="136" y="542" style="font-size:9.500px">350 dpi</text>
<text x="171" y="542" style="font-size:9.500px">47 %</text>
<text x="197" y="542" style="font-size:9.500px" textLength="46" lengthAdjust="spacingAndGlyphs">( -238, 828 )</text>
<text x="250" y="542" style="font-size:9.500px" textLength="408" lengthAdjust="spacingAndGlyphs">Draw a straight line by holding down Shift, Change a brush size by holding down Ctrl, Alt, and dragging</text>

<!-- taskbar -->
<rect y="546" width="1024" height="29" fill="url(#tb)"/>
<rect y="546" width="1024" height="1" fill="#555a70"/>
<circle cx="20" cy="561" r="14" fill="url(#orb)"/>
<path d="M14 555l5-1v6h-5z" fill="#e8523f"/><path d="M20 554l6-1v7h-6z" fill="#86c440"/><path d="M14 561h5v6l-5-1z" fill="#3a9ade"/><path d="M20 561h6v7l-6-1z" fill="#f3c433"/>
<path d="M68 553l10 7 11-7v20l-11-7-10 7z" fill="#7a3ec0"/><path d="M78 560l11-7v20l-11-7z" fill="#b99af0"/>
<circle cx="125" cy="561" r="12" fill="#5eb04a"/><circle cx="122" cy="563" r="6" fill="#fff"/><circle cx="122" cy="563" r="3" fill="#5eb04a"/><path d="M128 555l7-5-3 8zM130 560l7-2-5 4z" fill="#e8703a"/>
<rect x="150" y="547" width="43" height="28" fill="url(#task)"/>
<circle cx="171.500" cy="561" r="11.500" fill="#dd4a3a"/><path d="M171.500 561L162 567a11.500 11.500 0 0 0 11 5.500z" fill="#3aa757"/><path d="M171.500 561l0 11.500a11.500 11.500 0 0 0 10.500-16.500z" fill="#f5c31c"/><circle cx="171.500" cy="561" r="5.500" fill="#fff"/><circle cx="171.500" cy="561" r="4" fill="#4a8ee8"/>
<rect x="196" y="547" width="43" height="28" fill="url(#taskA)"/>
<rect x="206" y="550" width="24" height="23" rx="4" fill="#f2f2f2"/><path d="M220 553c-6 2-10 6-10 11a6 6 0 0 0 12 2c2-4 0-9-2-13z" fill="#2bb0a4"/><path d="M220 553c-5 2-6 5-5 9 3 2 6 1 7-2 1-3-1-5-2-7z" fill="#e8503f"/><circle cx="219" cy="567" r="3" fill="#3a7fd0"/><circle cx="213" cy="562" r="2.500" fill="#f3c433"/>
<rect x="243" y="547" width="43" height="28" fill="url(#task)"/>
<ellipse cx="263" cy="563" rx="10" ry="8" fill="#dce6ee"/><circle cx="259" cy="560" r="1.500" fill="#e8503f"/><circle cx="262" cy="566" r="1.500" fill="#3a7fd0"/><circle cx="267" cy="567" r="1.500" fill="#5eb04a"/><path d="M264 570l9-19 2 1-7 17z" fill="#e8a03a"/>
<text x="923" y="562" style="font-size:9.500px;fill:#c9cfe0">EN</text>
<path d="M948 563l2.500-3 2.500 3z" fill="#aeb4c8"/>
<text x="967" y="556" style="font-size:9.500px;fill:#d5d9e6">7:59 AM</text>
<text x="966" y="571" style="font-size:9.500px;fill:#d5d9e6">7/1/2021</text>
<rect x="1014" y="546" width="10" height="29" fill="#3d4050"/>
</svg>
</body></html>
